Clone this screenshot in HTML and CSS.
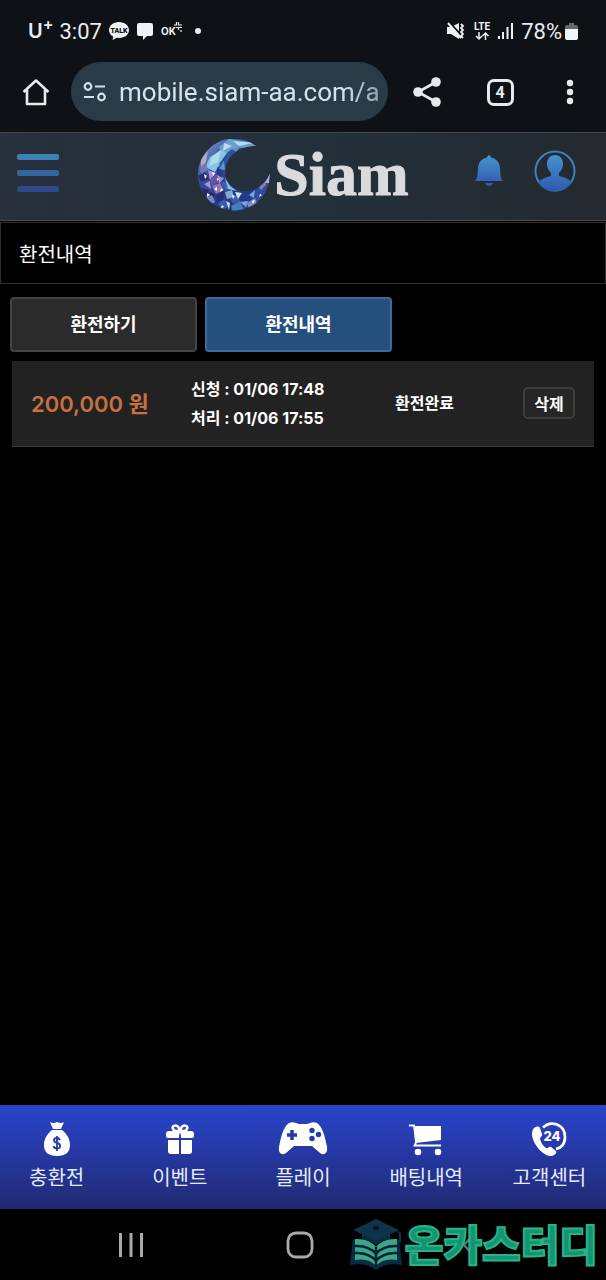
FILE: index.html
```html
<!DOCTYPE html>
<html lang="ko">
<head>
    <meta charset="UTF-8">
    <meta name="viewport" content="width=device-width, initial-scale=1.0">
    <title>환전내역</title>
    <link rel="stylesheet" href="styles.css">
</head>
<body>
    <div class="status-bar">
        <div class="status-left">
            <span class="carrier">U<sup>+</sup></span>
            <span class="clock">3:07</span>
            <svg class="talk" width="20" height="20" viewBox="0 0 20 20">
                <path d="M10 1C4.500 1 0 4.600 0 9c0 3 1.700 5.400 4.300 6.800L3.500 19l4.300-2.200c8 .9 12.200-3.300 12.200-7.800C20 4.600 15.500 1 10 1z" fill="#eef2f3"/>
                <text x="10" y="11.500" text-anchor="middle" class="talk-text">TALK</text>
            </svg>
            <svg class="message" width="18" height="18" viewBox="0 0 18 18">
                <path d="M3 1h12q2 0 2 2v9q0 2-2 2h-4l-4 4v-4H3q-2 0-2-2V3q0-2 2-2z" fill="#eef2f3"/>
            </svg>
            <svg width="22" height="18" viewBox="0 0 22 18">
                <text x="0" y="13" class="ok-text">OK</text>
                <path d="M13 3h2.500V0M17.500 0v3H21M15 5.500h2M21 5.500h-3.500V8M20 8v2" fill="none" stroke="#eef2f3" stroke-width="1.200"/>
            </svg>
            <span class="dot"></span>
        </div>
        <div class="status-right">
            <svg width="18" height="18" viewBox="0 0 18 18">
                <path d="M0 5h4l8-4v16l-8-5H0z" fill="#eef2f3"/>
                <path d="M2 0l13 14" stroke="#0e1216" stroke-width="2"/>
                <path d="M1 1l13 15" stroke="#eef2f3" stroke-width="2"/>
                <path d="M14 2l2 2-2 2 2 2-2 2 2 2-2 2 2 2" fill="none" stroke="#eef2f3" stroke-width="1.800"/>
            </svg>
            <svg class="lte" width="18" height="19" viewBox="0 0 18 19">
                <text x="9" y="8" text-anchor="middle" class="lte-text">LTE</text>
                <path d="M6 10v7M3 14l3 3 3-3M12.500 18v-7M9.500 14l3-3 3 3" fill="none" stroke="#eef2f3" stroke-width="1.500"/>
            </svg>
            <svg class="signal" width="17" height="18" viewBox="0 0 17 18" fill="#eef2f3">
                <path d="M1 14h2v3H1zM5 10h2v7H5zM9.500 5h2v12h-2zM14 1h2v16h-2z"/>
            </svg>
            <span>78%</span>
            <svg class="battery" width="13" height="19" viewBox="0 0 13 19">
                <path d="M4 1h5v2h2q2 0 2 2v3H0V5q0-2 2-2h2z" fill="#62676b"/>
                <path d="M0 7h13v9q0 2-2 2H2q-2 0-2-2z" fill="#f2f5f6"/>
            </svg>
        </div>
    </div>

    <div class="browser-bar">
        <button class="browser-btn home" type="button" aria-label="홈">
            <svg width="28" height="28" viewBox="0 0 28 28" fill="none" stroke="#e6eaec" stroke-width="2.600" stroke-linejoin="round">
                <path d="M1.500 14L14 2.500 26.500 14M5 11.500V26h18V11.500"/>
            </svg>
        </button>
        <div class="address">
            <svg width="24" height="20" viewBox="0 0 24 20" fill="none" stroke="#d4e3ea" stroke-width="2.200">
                <circle cx="5" cy="4.500" r="3.300"/>
                <path d="M12 4.500h10M1 15h10"/>
                <circle cx="18.500" cy="15" r="3.300"/>
            </svg>
            <input class="url" type="text" aria-label="주소" value="mobile.siam-aa.com/a">
        </div>
        <button class="browser-btn share" type="button" aria-label="공유">
            <svg width="28" height="30" viewBox="0 0 28 30" fill="#e6eaec">
                <path d="M23 5L5 15l18 10" fill="none" stroke="#e6eaec" stroke-width="2.600"/>
                <circle cx="23" cy="5" r="4.800"/>
                <circle cx="5" cy="15" r="4.800"/>
                <circle cx="23" cy="25" r="4.800"/>
            </svg>
        </button>
        <button class="browser-btn tabs" type="button" aria-label="열린 탭"><span class="tab-count">4</span></button>
        <button class="browser-btn more" type="button" aria-label="더보기">
            <svg width="8" height="26" viewBox="0 0 8 26" fill="#e6eaec">
                <circle cx="4" cy="4" r="3.200"/>
                <circle cx="4" cy="13" r="3.200"/>
                <circle cx="4" cy="22" r="3.200"/>
            </svg>
        </button>
    </div>

    <header class="site-header">
        <div class="header-left">
            <button class="menu-btn" type="button" aria-label="메뉴">
                <span class="bar bar-top"></span>
                <span class="bar bar-mid"></span>
                <span class="bar bar-low"></span>
            </button>
        </div>
        <a class="logo" href="#">
            <svg width="74" height="74" viewBox="0 -2 74 74">
                <defs>
                    <linearGradient id="gem" x1="0" y1="0" x2="1" y2="1">
                        <stop offset="0" stop-color="#8fb4de"/>
                        <stop offset=".3" stop-color="#3a4c9c"/>
                        <stop offset=".7" stop-color="#25357c"/>
                        <stop offset="1" stop-color="#4a78bd"/>
                    </linearGradient>
                    <clipPath id="moon">
                        <path d="M59 5A36 36 0 1 0 73 32C69 43 58 51 46 50C32 48 26 37 29 25C32 13 44 5 59 5z"/>
                    </clipPath>
                </defs>
                <g clip-path="url(#moon)">
                    <path d="M0-2h74v74H0z" fill="url(#gem)"/>
                    <path d="M32-2l28 4-2 4-18 1-14 8-4-9z" fill="#6c9ed0"/>
                    <path d="M36 0l20 2-14 3zM27 2l8 3-9 5z" fill="#b9dcf0"/>
                    <path d="M24 9l6 3-12 19-10-5 5-10z" fill="#84c4e4"/>
                    <path d="M24 9l-3 12-9 4 3-9z" fill="#b0dbee"/>
                    <path d="M30 12l5-4 3 2-7 9-4 8-5-4z" fill="#2c5499"/>
                    <path d="M35 8l9-3-5 6zM22 28l5-8 1 9z" fill="#5c95cd"/>
                    <path d="M4 18l7-8-2 11-5 5z" fill="#b3a9c0"/>
                    <path d="M3 27l6-5 2 7-7 4z" fill="#7577b2"/>
                    <path d="M1 35l7-4 4 7-8 3z" fill="#2c2c72"/>
                    <path d="M11 29l8 3-6 7zM20 34l7 3-5 6zM7 43l6-3 1 8z" fill="#a394d2"/>
                    <path d="M13 39l7-6 2 8-7 4z" fill="#68529d"/>
                    <path d="M20 26l6 4-1 7-5-4z" fill="#233c88"/>
                    <path d="M15 45l8-3 4 7-8 4z" fill="#8f76b9"/>
                    <path d="M4 47l8 2-3 7zM12 50l7 4-5 4z" fill="#2a2568"/>
                    <path d="M9 57l6-3 3 7-4 3z" fill="#6d8cca"/>
                    <path d="M19 54l8-4-1 9-6 3z" fill="#252e7a"/>
                    <path d="M24 42l6-2 5 6-6 4z" fill="#3a63b2"/>
                    <path d="M28 37l5 8 7 5-9-2z" fill="#8fbbe0"/>
                    <path d="M28 51l7-2 2 7-7 2z" fill="#80abd8"/>
                    <path d="M21 62l7-4 3 8-6 3zM33 58l7-5 3 7-7 3z" fill="#3c5aaa"/>
                    <path d="M29 60l4 2-1 7zM38 51l7 1-4 6z" fill="#cbe2f2"/>
                    <path d="M34 65l9-5 4 9-11 2z" fill="#4a79c0"/>
                    <path d="M45 53l7-2 2 8-7 2z" fill="#253b8b"/>
                    <path d="M43 61l8-1-2 6zM52 54l6-5-1 8z" fill="#76a6dc"/>
                    <path d="M50 62l8-5 2 6-8 5z" fill="#8389cf"/>
                    <path d="M58 50l8-6 1 8-7 5z" fill="#334c9e"/>
                    <path d="M62 46l8-11-1 9-5 5z" fill="#7f80b8"/>
                    <path d="M68 42l5-10-1 10z" fill="#b5aed0"/>
                    <path d="M7 33l3 2-2 3zM15 31l3 1-2 3zM17 48l3-2v4zM24 47l2 2-3 2zM10 52l3 2-3 2zM35 54l3 1-2 3zM25 64l2 2-3 1zM55 60l3-1-2 4zM63 53l2 1-3 2zM20 37l2 1-2 2z" fill="#fff"/>
                </g>
            </svg>
            <span class="logo-name">Siam</span>
        </a>
        <div class="header-right">
            <button class="icon-btn" type="button" aria-label="알림">
                <svg width="30" height="32" viewBox="0 0 30 32">
                    <defs>
                        <linearGradient id="blue" x1="0" y1="0" x2="0" y2="1">
                            <stop offset="0" stop-color="#4196cf"/>
                            <stop offset="1" stop-color="#3157ae"/>
                        </linearGradient>
                    </defs>
                    <path d="M15 0q1.500 0 2 2.500Q25 4 26 12C26.500 21 26.500 23 29 26H1c2.500-3 2.500-5 3-14Q5 4 13 2.500 13.500 0 15 0zM11 28h8q-1 3-4 3t-4-3z" fill="url(#blue)"/>
                </svg>
            </button>
            <button class="icon-btn" type="button" aria-label="내 정보">
                <svg width="42" height="42" viewBox="0 0 42 42">
                    <circle cx="21" cy="21" r="19.500" fill="none" stroke="#3b83c2" stroke-width="2"/>
                    <path d="M21 5c5 0 8 4 8 9 0 4-2 7-4 9v3c5 1 10 3 13 6-4 6-10 9-17 9S8 38 4 32c3-3 8-5 13-6v-3c-2-2-4-5-4-9 0-5 3-9 8-9z" fill="url(#blue)"/>
                </svg>
            </button>
        </div>
    </header>

    <main class="content">
        <h1 class="page-title">환전내역</h1>
        <div class="tab-row">
            <button class="tab" type="button">환전하기</button>
            <button class="tab active" type="button">환전내역</button>
        </div>
        <table class="history">
            <tbody>
                <tr>
                    <td class="amount">200,000 원</td>
                    <td class="dates">신청 : 01/06 17:48<br>처리 : 01/06 17:55</td>
                    <td class="state">환전완료</td>
                    <td class="action"><button class="delete-btn" type="button">삭제</button></td>
                </tr>
            </tbody>
        </table>
    </main>

    <nav class="bottom-nav">
        <div class="nav-list">
            <a class="nav-item" href="#">
                <svg width="40" height="36" viewBox="0 0 40 36" fill="#fff">
                    <path d="M13 1q3 2 7 0 4 2 7 0l-3 7h-8zM15 9h10c5 4 8 9 8 15 0 7-4 11-13 11S7 31 7 24c0-6 3-11 8-15z"/>
                    <path d="M23 19q-1-2-3-2-3 0-3 2.300 0 2 3 2.700 3.200.700 3.200 3T20 27.500q-3 0-3.500-2.500M20 15v15" fill="none" stroke="#263aa5" stroke-width="1.800"/>
                </svg>
                <span>충환전</span>
            </a>
            <a class="nav-item" href="#">
                <svg width="40" height="36" viewBox="0 0 40 36" fill="#fff">
                    <path d="M6 13q0-3 3-3h22q3 0 3 3v2q0 2-2 2H21v-6h-2v6H8q-2 0-2-2zM8 19h11v14h-8q-3 0-3-3zM21 19h11v11q0 3-3 3h-8z"/>
                    <path d="M19 10c-7 1-8-5-4-5.500 3-.500 4 2 5 5.500 1-3.500 2-6 5-5.500 4 .500 3 6.500-4 5.500" fill="none" stroke="#fff" stroke-width="2.600"/>
                </svg>
                <span>이벤트</span>
            </a>
            <a class="nav-item" href="#">
                <svg width="50" height="36" viewBox="0 0 50 36" fill="#fff">
                    <path d="M11 2c4-2 7 0 10 1h8c3-1 6-3 10-1 5 3 8 13 10 24 1 6-3 9-7 6L34 25H16L8 32c-4 3-8 0-7-6C3 15 6 5 11 2z"/>
                    <path d="M14 9v10M9 14h10" stroke="#263aa5" stroke-width="3.500"/>
                    <g fill="#263aa5">
                        <circle cx="34" cy="9.500" r="2.700"/>
                        <circle cx="40.500" cy="13.500" r="2.700"/>
                        <circle cx="34" cy="17.500" r="2.700"/>
                    </g>
                </svg>
                <span>플레이</span>
            </a>
            <a class="nav-item" href="#">
                <svg width="40" height="36" viewBox="0 0 40 36" fill="#fff">
                    <path d="M8 5h27v14L10 22z"/>
                    <path d="M3 4.500h5l2 17-1.500 3H35" fill="none" stroke="#fff" stroke-width="1.800"/>
                    <circle cx="12" cy="31" r="3.300"/>
                    <circle cx="32" cy="31" r="3.300"/>
                </svg>
                <span>배팅내역</span>
            </a>
            <a class="nav-item" href="#">
                <svg width="40" height="36" viewBox="0 0 40 36" fill="#fff">
                    <path d="M5 7c3-2 5-2 6 0l2 6c1 2-2 3-2 5 1 4 3 7 6 9 2 1 3-2 5-1l5 4c1 2-1 4-4 5C14 36 3 22 3 13c0-3 1-5 2-6z"/>
                    <path d="M14 6.500C22-1 36 3 36 16c0 7-4 11-9 12" fill="none" stroke="#fff" stroke-width="2.800"/>
                    <text x="23" y="20" text-anchor="middle" class="hours">24</text>
                </svg>
                <span>고객센터</span>
            </a>
        </div>
    </nav>

    <div class="system-nav">
        <button class="system-btn" type="button" aria-label="최근 앱">
            <svg width="24" height="26" viewBox="0 0 24 26" fill="#a9a9a9">
                <path d="M0 1h3v24H0zM10.500 1h3v24h-3zM21 1h3v24h-3z"/>
            </svg>
        </button>
        <button class="system-btn" type="button" aria-label="홈 화면">
            <svg width="28" height="28" viewBox="0 0 28 28" fill="none" stroke="#a9a9a9" stroke-width="2.800">
                <rect x="2" y="2" width="24" height="24" rx="8"/>
            </svg>
        </button>
        <button class="system-btn" type="button" aria-label="뒤로">
            <svg width="14" height="26" viewBox="0 0 14 26" fill="none" stroke="#4f7d70" stroke-width="2.400">
                <path d="M12 2L2 13l10 11"/>
            </svg>
        </button>
        <div class="watermark">
            <svg width="54" height="52" viewBox="0 0 54 52">
                <path d="M4 20L1 46q16-3 26 5 10-8 26-5l-3-26-23 14z" fill="#0a2c40"/>
                <path d="M6 20q14-1 21 8v19q-7-8-21-6z" fill="#3aa789"/>
                <path d="M48 20q-14-1-21 8v19q7-8 21-6z" fill="#3aa789"/>
                <path d="M5 27q15-1 22 8 7-9 22-8M5 34q15-1 22 8 7-9 22-8M27 28v20" fill="none" stroke="#062231" stroke-width="2.500"/>
                <path d="M13 12v8q8 1 14 6 6-5 14-6v-8z" fill="#0b2d41"/>
                <path d="M27 0l23 11-23 11L4 11zM48 11l4 3v9h-2v-8z" fill="#0d3449"/>
                <ellipse cx="27" cy="9" rx="3" ry="2" fill="#04111a"/>
            </svg>
            <span class="watermark-text">온카스터디</span>
        </div>
    </div>
</body>
</html>
```
FILE: styles.css
```css
* {
    box-sizing: border-box;
}
body {
    margin: 0;
    min-height: 100vh;
    display: flex;
    flex-direction: column;
    background: #000;
    color: #fff;
    font-family: Inter, "Noto Sans CJK KR", sans-serif;
    font-size: 16px;
}
button {
    font-family: inherit;
    color: inherit;
    padding: 0;
    border: 0;
    background: none;
    cursor: pointer;
}
a {
    color: inherit;
    text-decoration: none;
}
svg {
    display: block;
    flex: none;
}

/* phone status bar */
.status-bar {
    display: flex;
    justify-content: space-between;
    align-items: center;
    height: 62px;
    padding: 0 28px;
    background: #0e1216;
    color: #e9edef;
    font-family: Roboto, sans-serif;
    font-size: 22px;
}
.status-left,
.status-right {
    display: flex;
    align-items: center;
}
.carrier {
    font-family: Inter, sans-serif;
    font-size: 20px;
    font-weight: 600;
    line-height: 24px;
}
.carrier sup {
    font-size: 16px;
    line-height: 0;
}
.clock {
    margin: 0 7px 0 6px;
}
.message {
    margin: 0 7px;
}
.talk-text {
    font: 900 7px Roboto, sans-serif;
    fill: #0e1216;
}
.ok-text {
    font: 700 10px Inter, sans-serif;
    fill: #eef2f3;
}
.dot {
    width: 6px;
    height: 6px;
    margin-left: 12px;
    border-radius: 50%;
    background: #e9edef;
}
.lte {
    margin: 0 6px 0 8px;
}
.lte-text {
    font: 700 10px Roboto, sans-serif;
    fill: #eef2f3;
}
.signal {
    margin-right: 7px;
}
.battery {
    margin-left: 3px;
}

/* browser toolbar */
.browser-bar {
    display: flex;
    height: 70px;
    background: #0e1216;
}
.browser-btn {
    display: flex;
    justify-content: center;
    align-items: center;
    height: 60px;
}
.home {
    width: 71px;
}
.share {
    width: 78px;
}
.tabs {
    width: 68px;
}
.more {
    width: 72px;
}
.address {
    flex: 1;
    min-width: 0;
    display: flex;
    align-items: center;
    gap: 12px;
    height: 59px;
    padding: 0 8px 0 12px;
    border-radius: 30px;
    background: #293b46;
}
.url {
    flex: 1;
    min-width: 0;
    padding: 0;
    border: 0;
    outline: 0;
    background: none;
    color: #d6e3ea;
    font: 26px Roboto, sans-serif;
    mask-image: linear-gradient(to right, #000 85%, rgba(0, 0, 0, .6));
}
.tab-count {
    width: 27px;
    height: 27px;
    border: 3px solid #e6eaec;
    border-radius: 7px;
    color: #e6eaec;
    font: 700 16px/21px Roboto, sans-serif;
    text-align: center;
}

/* site header */
.site-header {
    display: grid;
    grid-template-columns: 1fr auto 1fr;
    align-items: center;
    height: 89px;
    border-top: 1px solid #424950;
    border-bottom: 1px solid #4a4c50;
    background: linear-gradient(to right, #282f3d, #23303a 50%, #24292f);
}
.header-left {
    padding-left: 17px;
}
.menu-btn {
    display: flex;
    flex-direction: column;
    gap: 10px;
    width: 42px;
    padding-bottom: 8px;
}
.bar {
    height: 6px;
    border-radius: 2px;
}
.bar-top {
    background: #3d82b2;
}
.bar-mid {
    background: #35659f;
}
.bar-low {
    background: #2d4a86;
}
.logo {
    display: flex;
    align-items: center;
    gap: 3px;
    padding-bottom: 2px;
}
.logo-name {
    padding-bottom: 4px;
    font: 700 62px/72px "Liberation Serif", serif;
    color: #d9dbde;
    -webkit-text-stroke: 1px #d9dbde;
}
.header-right {
    display: flex;
    justify-content: flex-end;
    align-items: center;
    gap: 30px;
    padding: 0 30px 12px 0;
}

/* page */
.content {
    flex: 1;
    padding-top: 1px;
}
.page-title {
    margin: 0;
    padding: 4px 18px 0;
    border: 1px solid #2f2f2f;
    font-size: 20px;
    font-weight: 400;
    line-height: 56px;
}
.tab-row {
    display: flex;
    gap: 8px;
    padding: 13px 10px 9px;
}
.tab {
    width: 187px;
    height: 55px;
    padding-bottom: 4px;
    border: 2px solid #434343;
    border-radius: 4px;
    background: #2b2b2b;
    font-size: 18px;
    font-weight: 700;
}
.tab.active {
    border-color: #3f6b9c;
    background: #25507d;
}
.history {
    width: calc(100% - 24px);
    height: 86px;
    margin: 0 12px;
    table-layout: fixed;
    border-collapse: collapse;
    border-bottom: 1px solid #3a3a3a;
    background: #222;
    font-weight: 700;
}
.history td {
    padding: 0 0 4px 19px;
    white-space: nowrap;
}
.history .amount {
    width: 160px;
    color: #c57140;
    font-size: 22px;
    font-weight: 600;
}
.history .dates {
    width: 204px;
    padding-bottom: 0;
    line-height: 29px;
}
.history .action {
    padding-right: 19px;
    padding-bottom: 2px;
    text-align: right;
}
.delete-btn {
    width: 52px;
    height: 32px;
    border: 2px solid #3d3d3d;
    border-radius: 5px;
    background: #262626;
    font-size: 16px;
    font-weight: 700;
}

/* bottom menu */
.bottom-nav {
    height: 104px;
    padding-top: 16px;
    background: linear-gradient(#2944cb, #263aa8 40%, #202a72);
    overflow: hidden;
}
.nav-list {
    display: grid;
    grid-template-columns: repeat(5, 1fr);
    margin: 0 -5px;
}
.nav-item {
    display: flex;
    flex-direction: column;
    align-items: center;
    gap: 6px;
    color: #e6eaff;
    font-size: 20px;
    line-height: 30px;
}
.hours {
    font: 800 13px Inter, sans-serif;
}

/* android buttons */
.system-nav {
    position: relative;
    display: grid;
    grid-template-columns: repeat(3, 1fr);
    height: 71px;
    padding: 0 53px 0 46px;
}
.system-btn {
    display: flex;
    justify-content: center;
    align-items: center;
}
.watermark {
    position: absolute;
    top: 0;
    right: 8px;
    display: flex;
    align-items: center;
    gap: 2px;
    height: 71px;
}
.watermark-text {
    padding-bottom: 4px;
    font: 900 42px/60px "Noto Sans CJK KR", sans-serif;
    color: #169472;
    -webkit-text-stroke: 2px #25b489;
}
```
